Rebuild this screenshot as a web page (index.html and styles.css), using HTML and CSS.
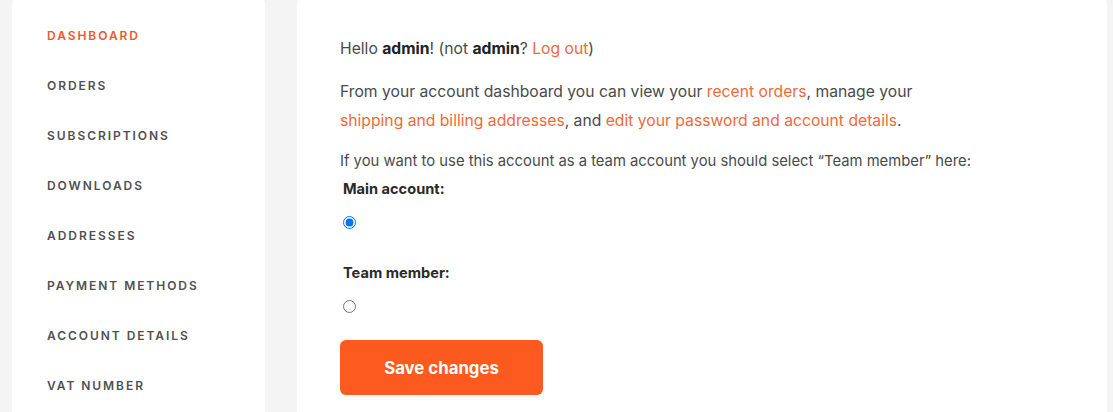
FILE: index.html
```html
<!DOCTYPE html>
<html lang="en">
<head>
<meta charset="utf-8">
<title>My account</title>
<link rel="stylesheet" href="styles.css">
</head>
<body>
<div class="layout">
  <nav class="sidebar">
    <ul class="nav">
      <li><a class="nav-link active" href="#">Dashboard</a></li>
      <li><a class="nav-link" href="#">Orders</a></li>
      <li><a class="nav-link" href="#">Subscriptions</a></li>
      <li><a class="nav-link" href="#">Downloads</a></li>
      <li><a class="nav-link" href="#">Addresses</a></li>
      <li><a class="nav-link" href="#">Payment methods</a></li>
      <li><a class="nav-link" href="#">Account details</a></li>
      <li><a class="nav-link" href="#">VAT Number</a></li>
    </ul>
  </nav>
  <main class="content">
    <p class="hello">Hello <strong>admin</strong>! (not <strong>admin</strong>? <a href="#">Log out</a>)</p>
    <p class="intro">From your account dashboard you can view your <a href="#">recent orders</a>, manage your <a href="#">shipping and billing addresses</a>, and <a href="#">edit your password and account details</a>.</p>
    <form class="team-form">
      <p class="note">If you want to use this account as a team account you should select “Team member” here:</p>
      <div class="field">
        <label class="field-label" for="main">Main account:</label>
        <input class="radio" type="radio" id="main" name="acct" checked>
      </div>
      <div class="field">
        <label class="field-label" for="team">Team member:</label>
        <input class="radio" type="radio" id="team" name="acct">
      </div>
      <button class="save" type="button">Save changes</button>
    </form>
  </main>
</div>
</body>
</html>
```

FILE: styles.css
```css
* { box-sizing: border-box; }
html, body { margin: 0; padding: 0; }
body {
  background: #f4f4f4;
  font-family: "Inter", "Noto Sans", sans-serif;
  color: #4a4a4a;
  overflow: hidden;
}
.layout {
  display: flex;
  gap: 32px;
  padding: 0 6px 0 12px;
  margin-top: -4px;
  align-items: stretch;
}
.sidebar {
  width: 253px;
  flex: none;
  background: #fff;
  border-radius: 8px;
  min-height: 440px;
}
.nav {
  list-style: none;
  margin: 0;
  padding: 15px 0 0 35px;
}
.nav-link {
  display: block;
  height: 50px;
  line-height: 50px;
  font-size: 12px;
  font-weight: 600;
  letter-spacing: 1.95px;
  text-transform: uppercase;
  text-decoration: none;
  color: #505052;
}
.nav-link.active { color: #f0582a; }
.content {
  flex: 1;
  background: #fff;
  border-radius: 8px;
  min-height: 440px;
  padding: 38px 43px 0 43px;
}
.content p { margin: 0; }
.content a { color: #ee6a3c; text-decoration: none; }
.content strong { color: #222; font-weight: 700; }
.hello {
  font-size: 15.7px;
  line-height: 29px;
}
.intro {
  margin-top: 14px !important;
  font-size: 15.7px;
  line-height: 29px;
  max-width: 600px;
}
.note {
  margin-top: 14px !important;
  font-size: 14.8px;
  line-height: 24px;
}
.field {
  display: flex;
  flex-direction: column;
  align-items: flex-start;
  margin-top: 6px;
}
.field + .field { margin-top: 34px; }
.field-label {
  font-size: 14.6px;
  font-weight: 700;
  line-height: 20px;
  color: #2a2a2a;
  margin-left: 3px;
}
.radio {
  margin: 17px 0 0 3px;
  width: 13px;
  height: 13px;
}
.save {
  display: block;
  margin-top: 27px;
  width: 203px;
  height: 55px;
  border: 0;
  border-radius: 6px;
  background: #fd5a1f;
  color: #fff;
  font-family: inherit;
  font-size: 16.8px;
  font-weight: 700;
  cursor: pointer;
}
```
